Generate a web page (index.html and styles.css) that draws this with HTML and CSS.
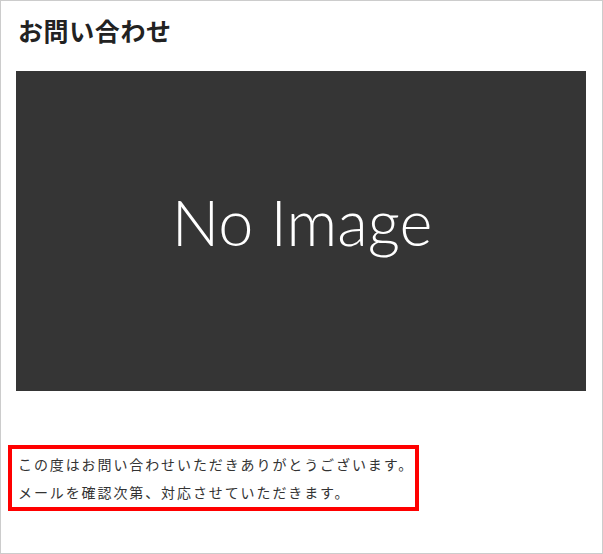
FILE: index.html
```html
<!DOCTYPE html>
<html lang="ja">
<head>
<meta charset="utf-8">
<title>お問い合わせ</title>
<link rel="stylesheet" href="styles.css">
</head>
<body>
<div class="page">
  <h1 class="title">お問い合わせ</h1>
  <div class="noimage"><span class="noimage-text">No Image</span></div>
  <div class="message">
    <p class="line">この度はお問い合わせいただきありがとうございます。</p>
    <p class="line">メールを確認次第、対応させていただきます。</p>
  </div>
</div>
</body>
</html>
```
FILE: styles.css
```css
html, body {
  margin: 0;
  padding: 0;
  background: #fff;
}
.page {
  box-sizing: border-box;
  width: 603px;
  height: 554px;
  border: 1px solid #cccccc;
  padding: 11px 16px 0 15px;
  font-family: "Noto Sans CJK JP", "Noto Sans", sans-serif;
  color: #333;
}
.title {
  margin: 0 0 23px 2px;
  font-size: 25px;
  line-height: 36px;
  letter-spacing: 0.6px;
  font-weight: 700;
  color: #222;
}
.noimage {
  height: 320px;
  background: #353535;
  display: flex;
  align-items: center;
  justify-content: center;
}
.noimage-text {
  font-family: "Lato", sans-serif;
  font-weight: 300;
  font-size: 63px;
  color: #fff;
  margin-top: -20px;
  margin-left: 2px;
}
.message {
  display: inline-block;
  box-sizing: border-box;
  width: 411px;
  margin: 54px 0 0 -8px;
  border: 4px solid #ff0000;
  padding: 1px 4px 1px 6px;
}
.line {
  margin: 0;
  font-size: 14px;
  line-height: 28px;
  letter-spacing: 1.9px;
  color: #333;
  white-space: nowrap;
}
```
